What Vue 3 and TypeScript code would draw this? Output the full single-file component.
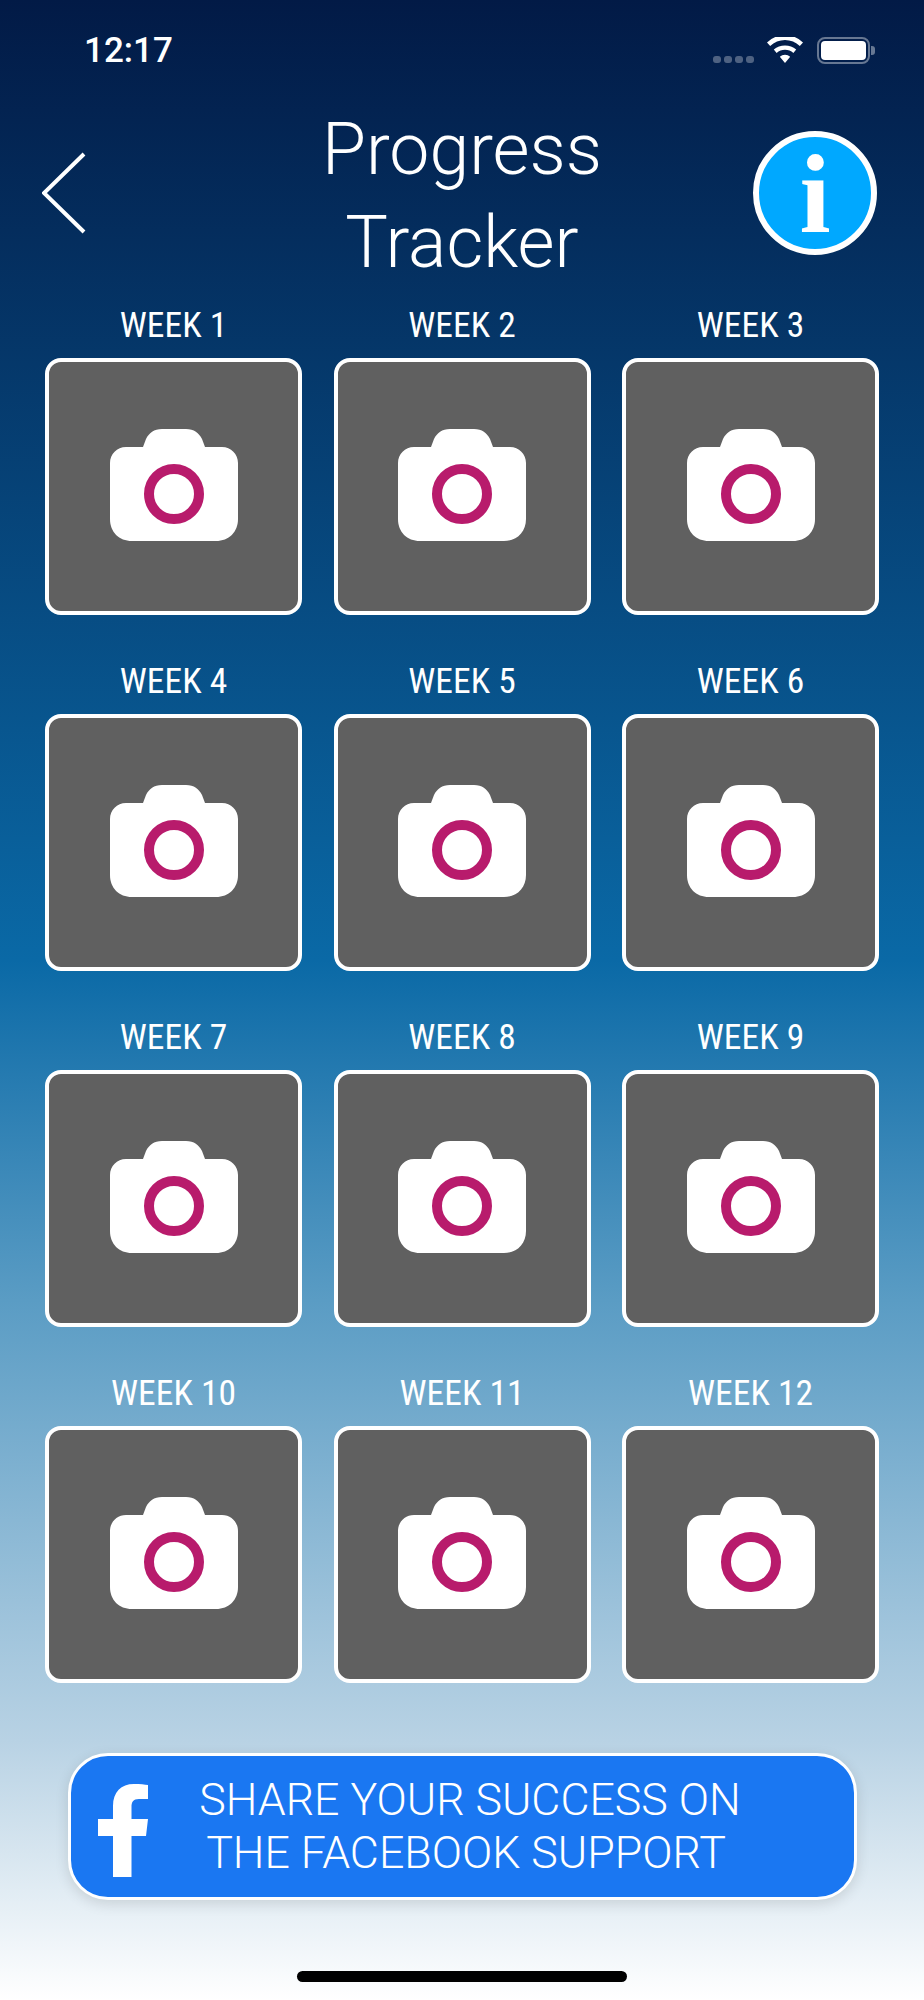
<script setup lang="ts">
const weeks = Array.from({ length: 12 }, (_, i) => i + 1)
</script>

<template>
  <div class="screen">
    <div class="status">
      <span class="time">12:17</span>
      <div class="status-icons">
        <div class="dots"><i></i><i></i><i></i><i></i></div>
        <svg class="wifi" width="36" height="26" viewBox="0 0 36 26">
          <path d="M18 26l-5.2-6.2a7.6 7.6 0 0 1 10.4 0zM9.6 16a12.6 12.6 0 0 1 16.8 0l2.8-3.4a17 17 0 0 0-22.4 0zM3.2 9a21 21 0 0 1 29.6 0L36 5.4a26 26 0 0 0-36 0z" fill="#fff"/>
        </svg>
        <div class="battery"><div class="battery-fill"></div></div>
      </div>
    </div>

    <header class="head">
      <svg class="back" width="44" height="82" viewBox="0 0 44 82">
        <path d="M42 2L2 41l40 39" fill="none" stroke="#fff" stroke-width="4"/>
      </svg>
      <h1>Progress<br>Tracker</h1>
      <div class="info">i</div>
    </header>

    <div class="grid">
      <div v-for="w in weeks" :key="w" class="cell">
        <div class="label">WEEK {{ w }}</div>
        <div class="tile">
          <svg class="cam" width="128" height="112" viewBox="0 0 128 112">
            <path d="M33 18l3-8C39 4 44 0 52 0h24c8 0 13 4 16 10l3 8h17c9 0 16 7 16 16v56c0 13-9 22-22 22H22C9 112 0 103 0 90V34c0-9 7-16 16-16z" fill="#fff"/>
            <circle cx="64" cy="65" r="25" fill="none" stroke="#b81b6c" stroke-width="10"/>
          </svg>
        </div>
      </div>
    </div>

    <div class="share">
      <svg class="fb" width="50" height="93" viewBox="0 0 50 93">
        <path d="M15 93V52H0V35h15V22C15 8 23 0 36 0c6 0 11 .5 14 1v14h-9c-6 0-7.500 3-7.500 8v12H50l-2 17H33.500v41z" fill="#fff"/>
      </svg>
      <div class="share-text">
        <span>SHARE YOUR SUCCESS ON</span>
        <span class="second">THE FACEBOOK SUPPORT</span>
      </div>
    </div>

    <div class="home"></div>
  </div>
</template>

<style>
html, body { margin: 0; }
</style>

<style scoped>
.screen {
  width: 924px;
  height: 2000px;
  overflow: hidden;
  color: #fff;
  font-family: Roboto, "Liberation Sans", sans-serif;
  background: linear-gradient(180deg, #021a46 0%, #0a69a6 48%, #5a9cc4 65%, #b8d2e4 87%, #ffffff 100%);
}

.status {
  height: 100px;
  padding: 37px 54px 0 84px;
  box-sizing: border-box;
  display: flex;
  justify-content: space-between;
}
.time { font-size: 35px; font-weight: 500; line-height: 28px; }
.status-icons { display: flex; align-items: flex-start; height: 27px; }
.dots { display: flex; gap: 3px; margin: 19px 13px 0 0; }
.dots i { width: 8px; height: 7px; border-radius: 3px; background: rgba(255,255,255,.3); }
.wifi { margin-right: 14px; }
.battery {
  position: relative;
  width: 53px;
  height: 27px;
  box-sizing: border-box;
  border: 2px solid rgba(255,255,255,.4);
  border-radius: 8px;
  padding: 2px;
}
.battery::after {
  content: "";
  position: absolute;
  right: -7px;
  top: 7px;
  width: 4px;
  height: 9px;
  border-radius: 0 3px 3px 0;
  background: rgba(255,255,255,.4);
}
.battery-fill { height: 100%; background: #fff; border-radius: 4px; }

.head {
  height: 190px;
  padding: 3px 42px 0;
  box-sizing: border-box;
  display: grid;
  grid-template-columns: minmax(0, 1fr) auto minmax(0, 1fr);
  align-items: start;
}
h1 {
  margin: 0;
  font-size: 71.500px;
  font-weight: 300;
  line-height: 93px;
  text-align: center;
}
.back { margin-top: 49px; }
.info {
  justify-self: end;
  width: 124px;
  height: 124px;
  margin: 28px 5px 0 0;
  box-sizing: border-box;
  border: 6px solid #fff;
  border-radius: 50%;
  background: #00a8ff;
  text-align: center;
  font-family: "Liberation Serif", serif;
  font-weight: 700;
  font-size: 112px;
  line-height: 114px;
}

.grid {
  padding: 0 45px;
  display: grid;
  grid-template-columns: repeat(3, 257px);
  column-gap: 31.5px;
  row-gap: 31px;
}
.label {
  height: 65px;
  padding-top: 3px;
  text-align: center;
  font-size: 35.500px;
  line-height: 64px;
  font-stretch: 75%;
}
.tile {
  height: 257px;
  box-sizing: border-box;
  border: 4.500px solid #fff;
  border-radius: 16px;
  background: #606060;
  display: flex;
  align-items: center;
  justify-content: center;
}
.cam { margin-bottom: 3px; }

.share {
  margin: 70px 67px 0 68px;
  height: 147px;
  box-sizing: border-box;
  border: 3px solid #fff;
  border-radius: 40px;
  background: #1a77f2;
  box-shadow: 0 4px 14px rgba(0,0,0,.12);
  display: flex;
  align-items: center;
  padding-left: 27px;
}
.fb { margin-top: 8px; }
.share-text {
  flex: 1;
  text-align: center;
  margin-right: 62px;
  font-size: 44.700px;
  font-weight: 300;
  line-height: 53px;
}
.share-text span { display: block; }
.share-text .second { padding-right: 8px; }

.home {
  width: 330px;
  height: 11px;
  margin: 71px auto 0;
  border-radius: 6px;
  background: #000;
}
</style>
